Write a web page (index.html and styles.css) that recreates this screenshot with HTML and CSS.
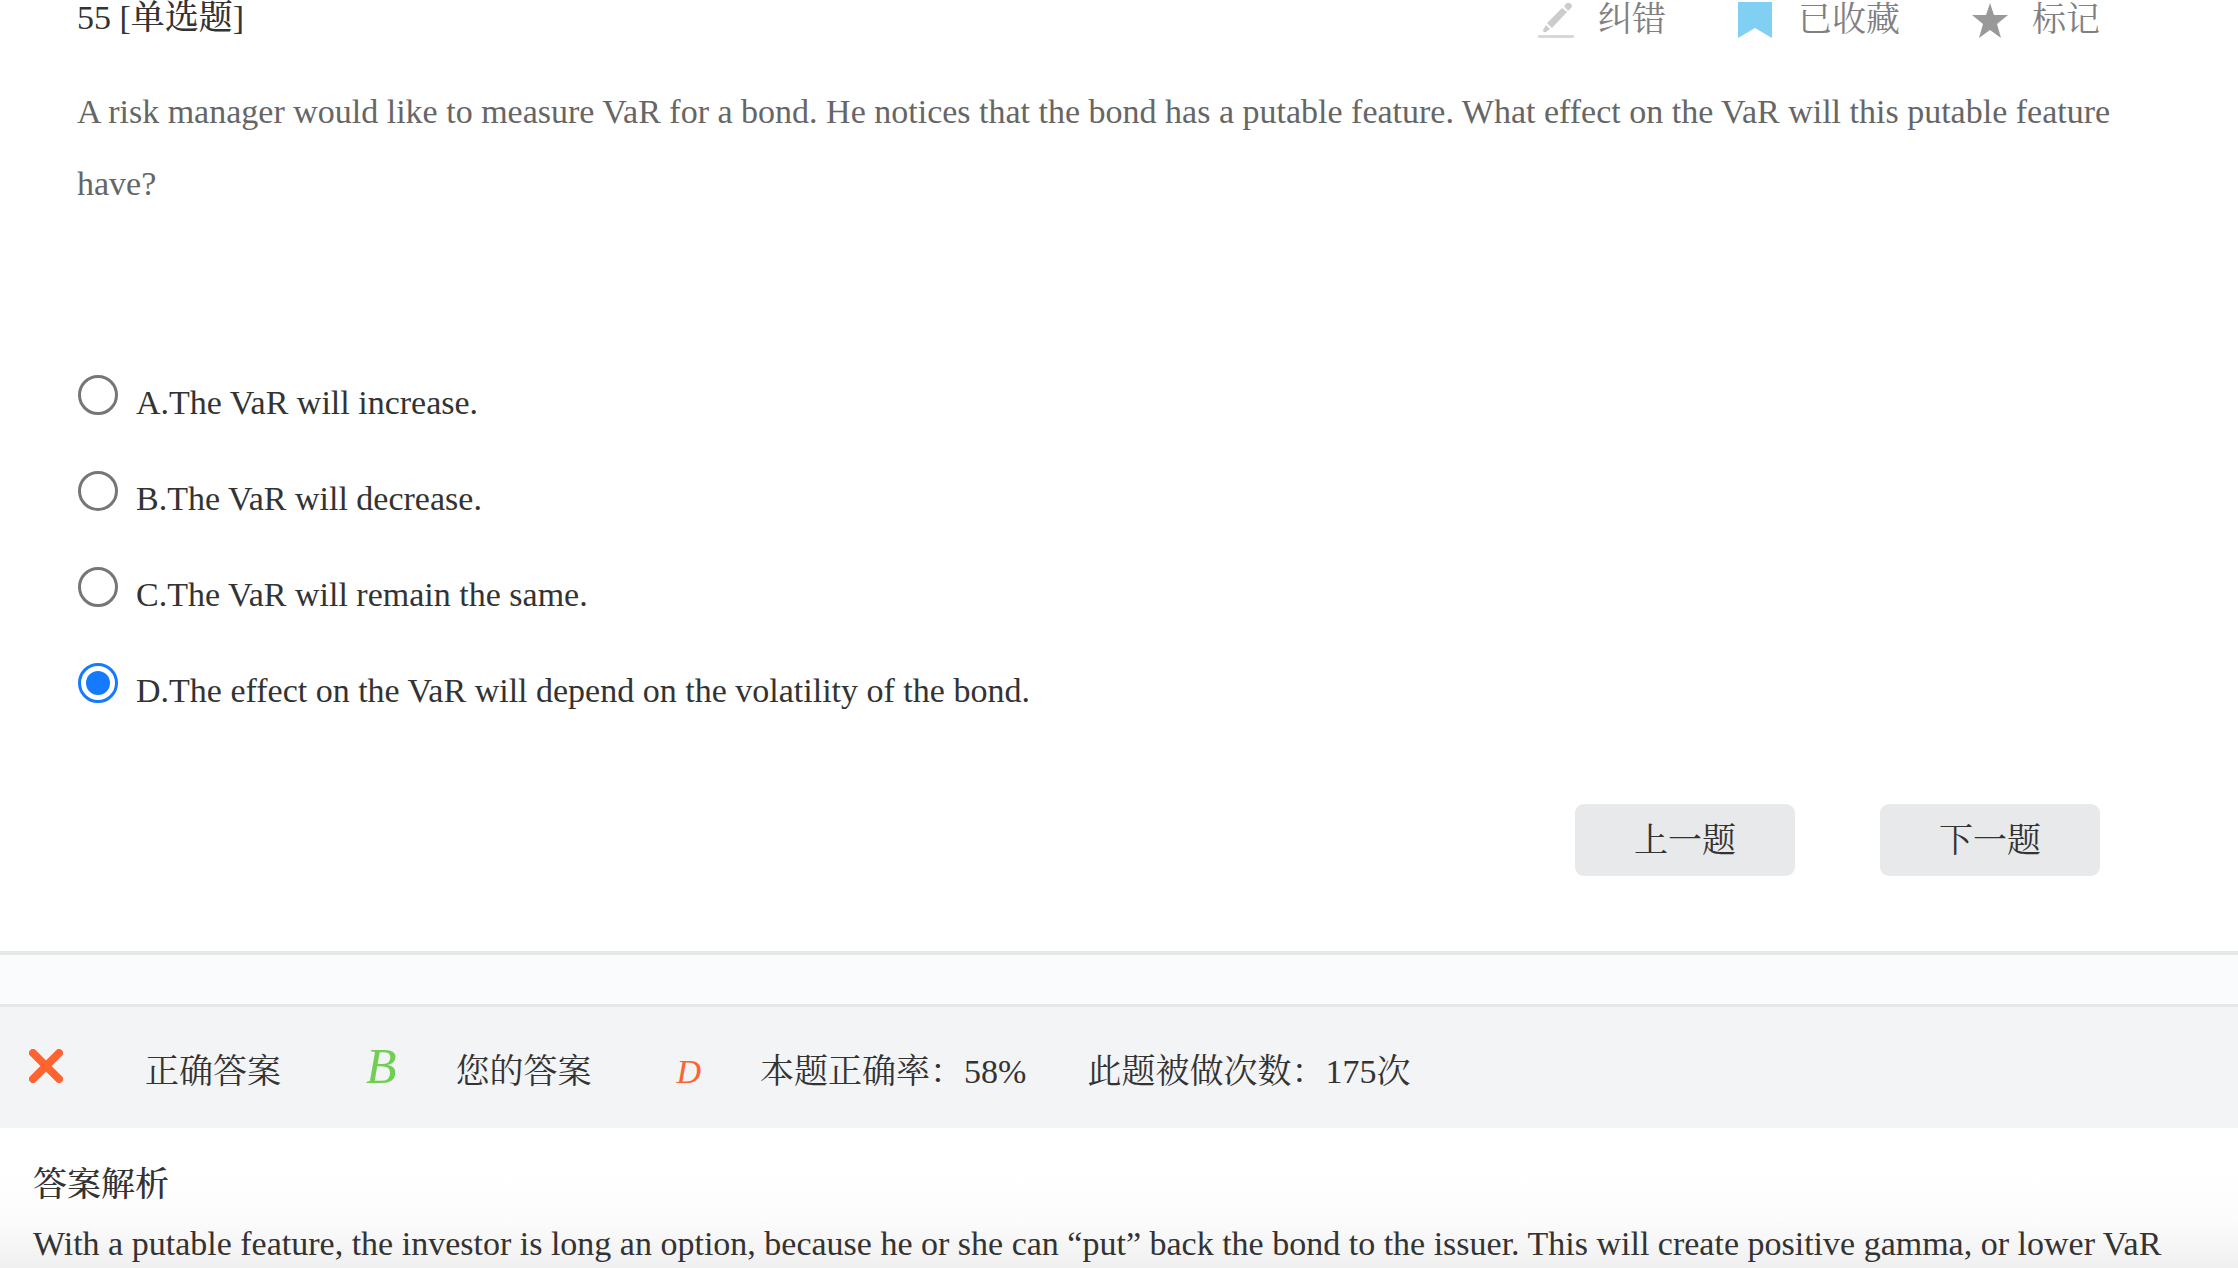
FILE: index.html
```html
<!DOCTYPE html>
<html lang="zh-CN">
<head>
<meta charset="utf-8">
<title>单选题</title>
<link rel="stylesheet" href="styles.css">
</head>
<body>
<main class="page">
  <section class="question">
    <header class="question-head">
      <h1 class="question-title">55 [单选题]</h1>
      <div class="tools">
        <button class="tool" type="button">
          <svg class="tool-icon" viewBox="0 0 36 36" aria-hidden="true">
            <path fill="#d8d8d8" d="M0 33h36v3H0z"/>
            <path fill="#ccc" d="M24 6l5 4-15 16-5-5zM8 23l4 4-4 3q-3 1-3-2z"/>
            <path fill="#ccc" d="M26 4l3-3q2-1 4 1 2 2 0 4l-3 3z"/>
          </svg>
          <span>纠错</span>
        </button>
        <button class="tool" type="button">
          <svg class="tool-icon" viewBox="0 0 36 36" aria-hidden="true">
            <path fill="#82cff4" d="M0 0h34v36L17 26 0 36z"/>
          </svg>
          <span>已收藏</span>
        </button>
        <button class="tool" type="button">
          <svg class="tool-icon" viewBox="0 0 36 36" aria-hidden="true">
            <path fill="#999" d="M18 1l4 12h14L25 22l4 14-11-8-11 8 4-14L0 13h14z"/>
          </svg>
          <span>标记</span>
        </button>
      </div>
    </header>
    <p class="question-text">A risk manager would like to measure VaR for a bond. He notices that the bond has a putable feature. What effect on the VaR will this putable feature have?</p>
    <form class="options">
      <label class="option"><input class="option-radio" type="radio" name="answer" value="A"><span class="option-text">A.The VaR will increase.</span></label>
      <label class="option"><input class="option-radio" type="radio" name="answer" value="B"><span class="option-text">B.The VaR will decrease.</span></label>
      <label class="option"><input class="option-radio" type="radio" name="answer" value="C"><span class="option-text">C.The VaR will remain the same.</span></label>
      <label class="option"><input class="option-radio" type="radio" name="answer" value="D" checked><span class="option-text">D.The effect on the VaR will depend on the volatility of the bond.</span></label>
    </form>
    <nav class="pager">
      <button class="pager-button" type="button">上一题</button>
      <button class="pager-button" type="button">下一题</button>
    </nav>
  </section>
  <div class="divider"></div>
  <section class="result">
    <svg class="result-mark" viewBox="0 0 34 34" role="img" aria-label="错误">
      <path fill="none" stroke="#ff6430" stroke-width="8" stroke-linecap="round" d="M4 4l26 26M30 4L4 30"/>
    </svg>
    <span class="result-label">正确答案</span>
    <em class="result-correct">B</em>
    <span class="result-label">您的答案</span>
    <em class="result-yours">D</em>
    <span class="result-rate">本题正确率：58%</span>
    <span class="result-label">此题被做次数：175次</span>
  </section>
  <section class="analysis">
    <h2 class="analysis-title">答案解析</h2>
    <p class="analysis-text">With a putable feature, the investor is long an option, because he or she can “put” back the bond to the issuer. This will create positive gamma, or lower VaR</p>
  </section>
</main>
</body>
</html>
```
FILE: styles.css
```css
* {
  box-sizing: border-box;
}

body {
  margin: 0;
  background: #fff;
  color: #333;
  font-family: "Liberation Serif", "Noto Serif CJK SC", "Noto Sans CJK SC", serif;
  font-size: 34px;
  line-height: 48px;
}

h1,
h2,
p {
  margin: 0;
}

h1,
h2 {
  font-size: 34px;
  font-weight: 500;
}

button {
  border: 0;
  padding: 0;
  color: inherit;
  font: inherit;
  cursor: pointer;
}

.page {
  display: flex;
  flex-direction: column;
  min-height: 100vh;
}

.question {
  padding: 0 77px 75px;
}

.question-head {
  display: flex;
  justify-content: space-between;
  height: 76px;
  padding-right: 61px;
}

.question-title {
  margin-top: -6px;
}

.tools {
  display: flex;
  align-items: flex-start;
  gap: 72px;
}

.tool {
  display: flex;
  gap: 24px;
  margin-top: -4px;
  background: none;
  color: #808080;
}

.tool-icon {
  width: 36px;
  height: 36px;
  margin-top: 6px;
}

.question-text {
  color: #666;
  line-height: 72px;
}

.options {
  display: flex;
  flex-direction: column;
  align-items: flex-start;
  gap: 47px;
  padding: 155px 0 0 1px;
}

.option {
  display: flex;
  gap: 18px;
}

.option-radio {
  appearance: none;
  display: grid;
  place-items: center;
  width: 40px;
  height: 40px;
  margin: 0;
  border: 3px solid #767676;
  border-radius: 50%;
  background: #fff;
}

.option-radio:checked {
  border-color: #147aff;
}

.option-radio:checked::before {
  content: "";
  width: 24px;
  height: 24px;
  border-radius: 50%;
  background: #147aff;
}

.option-text {
  padding-top: 6px;
  line-height: 43px;
}

.pager {
  display: flex;
  justify-content: flex-end;
  gap: 85px;
  padding: 92px 61px 0 0;
}

.pager-button {
  width: 220px;
  height: 72px;
  padding-top: 2px;
  border-radius: 9px;
  background: #e8e9eb;
}

.divider {
  height: 56px;
  border-top: 4px solid #e6e8e8;
  border-bottom: 3px solid #e6e8e8;
  background: #f9fbfd;
}

.result {
  display: flex;
  align-items: baseline;
  height: 121px;
  padding: 35px 29px 0;
  background: #f3f4f6;
}

.result-mark {
  width: 34px;
  height: 34px;
  margin-right: 82px;
}

.result-correct {
  margin: 0 59px 0 85px;
  color: #6fcf50;
  font-size: 50px;
}

.result-yours {
  margin: 0 59px 0 85px;
  color: #ff6430;
}

.result-rate {
  margin-right: 61px;
}

.analysis {
  flex: 1;
  padding: 33px 33px 0;
  background: linear-gradient(to top, #f0f0f0, #fcfcfc 48px, #fff 96px);
}

.analysis-text {
  padding-top: 12px;
  line-height: 46px;
}
```
